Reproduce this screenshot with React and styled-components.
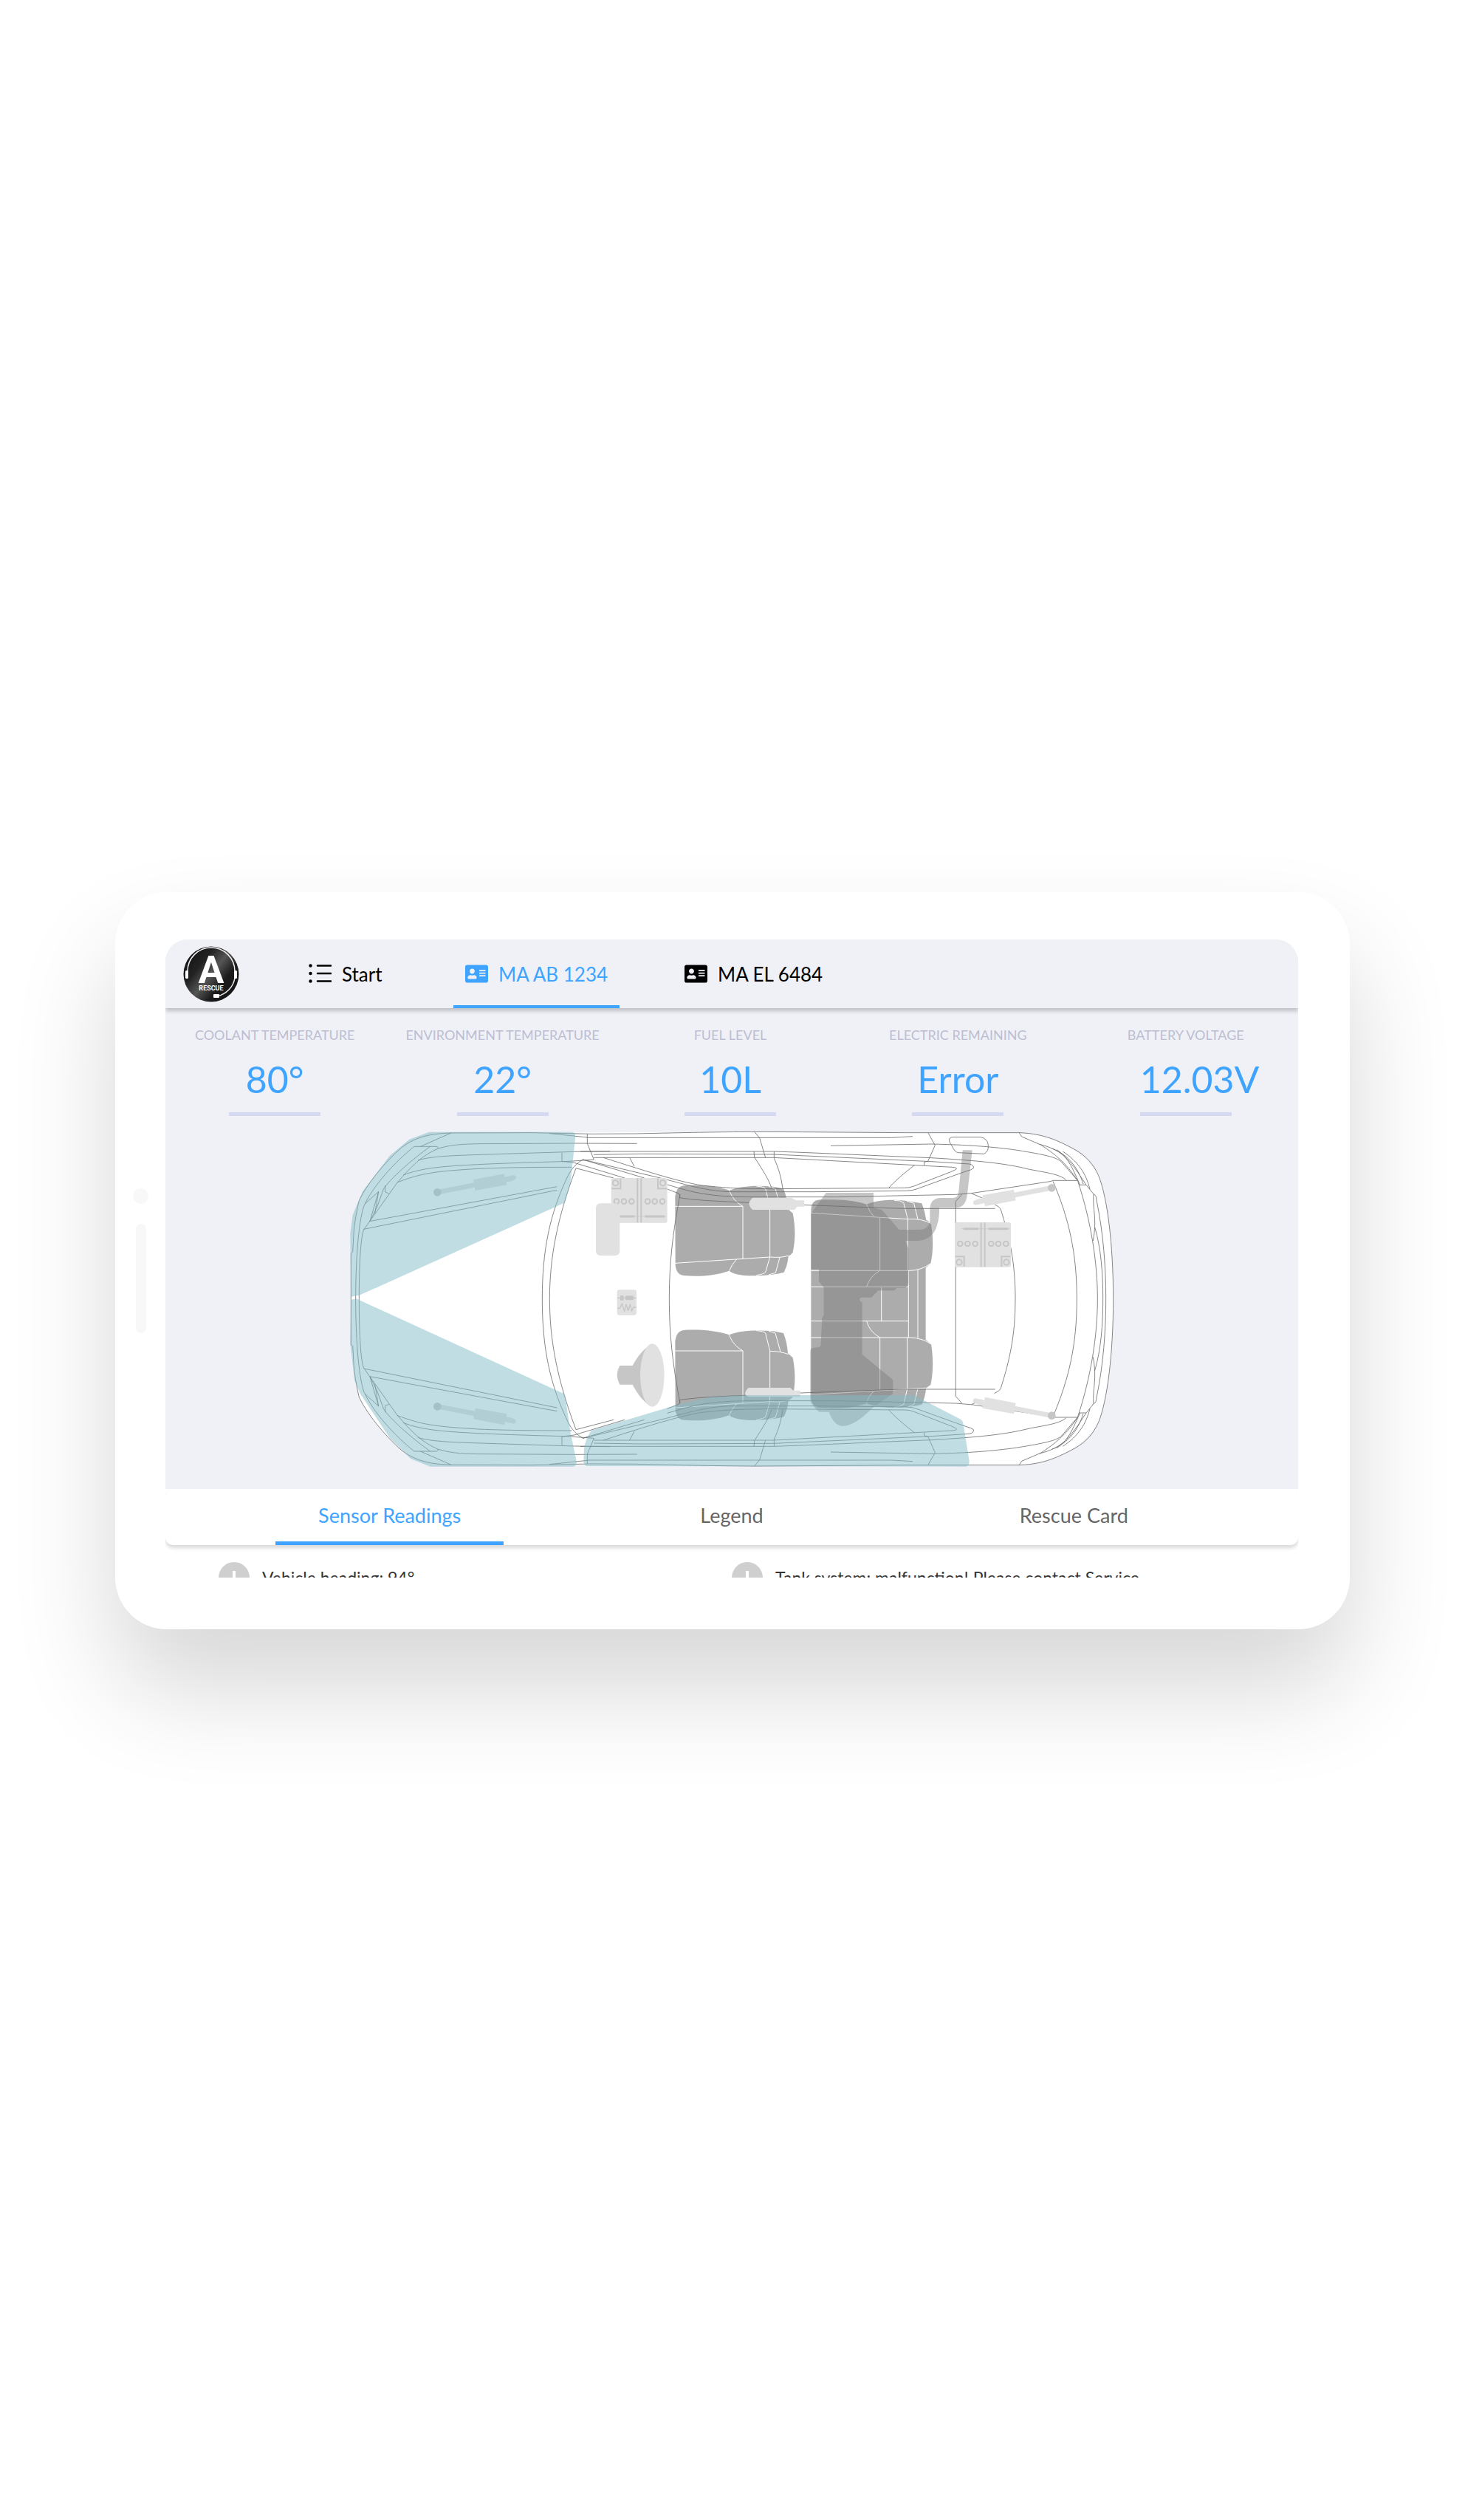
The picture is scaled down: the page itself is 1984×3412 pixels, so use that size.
import React, { useState } from 'react'
import styled, { createGlobalStyle } from 'styled-components'
import { FaAddressCard } from 'react-icons/fa'

const GlobalStyle = createGlobalStyle`
  * {
    box-sizing: border-box;
  }
  body {
    margin: 0;
    background: #fff;
    font-family: 'Lato', sans-serif;
  }
  button {
    border: 0;
    padding: 0;
    background: none;
    font: inherit;
    cursor: pointer;
  }
`

const Page = styled.main`
  min-height: 100vh;
  padding: 2px 156px 0;
  display: grid;
  align-items: center;
  overflow: hidden;
`

const Device = styled.div`
  position: relative;
  padding: 64px 70px 70px 68px;
  border-radius: 70px;
  background: #fff;
  box-shadow: 0 80px 140px rgba(0, 0, 0, 0.16);
`

const SideButtons = styled.div`
  position: absolute;
  left: 24px;
  top: 401px;
  display: grid;
  justify-items: center;
  gap: 27px;
`

const HomeButton = styled.div`
  width: 21px;
  height: 21px;
  border-radius: 50%;
  background: #f8f8f8;
`

const Speaker = styled.div`
  width: 14px;
  height: 148px;
  border-radius: 7px;
  background: #f8f8f8;
`

const Screen = styled.div`
  height: 864px;
  overflow: hidden;
  border-radius: 30px 30px 0 0;
  background: #fff;
`

const Header = styled.header`
  position: relative;
  height: 93px;
  padding-left: 24px;
  display: flex;
  align-items: center;
  background: #f0f1f7;
  box-shadow: 0 4px 5px rgba(0, 0, 0, 0.2);
`

const Nav = styled.nav`
  height: 100%;
  margin-left: 78px;
  display: flex;
  gap: 72px;
`

const NavTab = styled.button`
  height: 100%;
  min-width: 140px;
  padding: 0 16px;
  display: flex;
  align-items: center;
  gap: 14px;
  color: ${props => props.$active ? '#3ea4ff' : '#000'};
  box-shadow: ${props => props.$active ? 'inset 0 -4px #3ea4ff' : 'none'};
  font-size: 26px;
  line-height: 32px;
  white-space: nowrap;

  svg {
    width: 31px;
    height: 31px;
  }
`

const Vehicle = styled.section`
  padding: 26px 0;
  background: #f0f1f7;
`

const Metrics = styled.div`
  margin: 0 -2px 19px -6px;
  display: grid;
  grid-template-columns: repeat(5, 1fr);
`

const Metric = styled.div`
  display: flex;
  flex-direction: column;
  align-items: center;
`

const MetricLabel = styled.div`
  color: #bcbed2;
  font-size: 18px;
  line-height: 20px;
  white-space: nowrap;
`

const MetricValue = styled.div`
  width: 124px;
  height: 100px;
  padding-top: 18px;
  border-bottom: 5px solid #d5d9f1;
  color: #3ea4ff;
  font-size: 50px;
  line-height: 64px;
  display: flex;
  justify-content: ${props => props.$wide ? 'flex-start' : 'center'};
`

const CarDrawing = styled.svg`
  display: block;
  width: 100%;
  max-width: 1040px;
  margin: 0 auto;
`

const Tabs = styled.div`
  position: relative;
  height: 76px;
  padding: 0 72px;
  display: grid;
  grid-template-columns: repeat(3, 1fr);
  border-radius: 10px;
  background: #fff;
  box-shadow: 0 4px 5px rgba(0, 0, 0, 0.15);
`

const Tab = styled.button`
  position: relative;
  padding-bottom: 4px;
  color: ${props => props.$active ? '#3ea4ff' : '#666'};
  font-size: 27px;
  line-height: 32px;

  &::after {
    content: '';
    position: absolute;
    left: calc(100% / 6);
    right: calc(100% / 6);
    bottom: 0;
    height: 5px;
    background: ${props => props.$active ? '#3ea4ff' : 'transparent'};
  }
`

const Readings = styled.ul`
  list-style: none;
  margin: 0;
  padding: 23px 0 0 72px;
  display: grid;
  grid-template-columns: 695px 1fr;
`

const Reading = styled.li`
  display: flex;
  align-items: center;
  gap: 17px;
  color: #333;
  font-size: 23px;
  line-height: 42px;
  white-space: nowrap;

  svg {
    width: 42px;
    height: 42px;
  }
`

const Logo = () => (
  <svg width="76" height="76" viewBox="0 0 76 76" role="img" aria-label="A Rescue">
    <defs>
      <linearGradient id="metal" x1="0" y1="0.1" x2="1" y2="0.9">
        <stop offset="0" stopColor="#111" />
        <stop offset="0.3" stopColor="#222" />
        <stop offset="0.5" stopColor="#555" />
        <stop offset="0.7" stopColor="#1c1c1c" />
        <stop offset="1" stopColor="#111" />
      </linearGradient>
    </defs>
    <circle cx="38" cy="38" r="37.5" fill="url(#metal)" />
    <path d="M6 34A32 32 0 0 1 70 34M70 43C68 56 58 65 46 68" fill="none" stroke="#eee" strokeWidth="1.5" />
    <rect x="3" y="33" width="4" height="11" rx="1.5" fill="#fff" />
    <rect x="69" y="33" width="4" height="11" rx="1.5" fill="#fff" />
    <rect x="41" y="65" width="8" height="5" rx="1" fill="#fff" />
    <text x="38" y="50" textAnchor="middle" fill="#fff" fontFamily="Roboto" fontWeight="700" fontSize="52">A</text>
    <text x="38" y="60" textAnchor="middle" fill="#fff" fontFamily="Roboto" fontWeight="700" fontSize="9">RESCUE</text>
  </svg>
)

const ListIcon = () => (
  <svg viewBox="0 0 31 31" fill="currentColor" aria-hidden="true">
    <circle cx="2.5" cy="4.5" r="2.2" />
    <circle cx="2.5" cy="15" r="2.2" />
    <circle cx="2.5" cy="25.5" r="2.2" />
    <path d="M12 4.5H30M12 15H30M12 25.5H30" stroke="currentColor" strokeWidth="2.6" strokeLinecap="round" />
  </svg>
)

const WarningIcon = () => (
  <svg viewBox="0 0 42 42" aria-hidden="true">
    <circle cx="21" cy="21" r="21" fill="#cfcfcf" />
    <path d="M21 12V24M21 28V32" stroke="#fff" strokeWidth="4" />
  </svg>
)

// upper half of the body lines, the lower half is the same thing flipped
const BodyHalf = () => (
  <>
    <path d="M43 746V560L50 555L52 520C55 450 60 420 75 350C100 290 180 190 250 130C310 85 370 75 450 72L780 71L1020 76L1200 75C1420 70 1520 68 1680 67L1880 68L2300 71H2760C2860 75 2920 105 2985 140C3030 165 3060 200 3080 245C3115 330 3140 520 3140 746" />
    <path d="M325 127L450 72M390 127H300C220 190 130 290 95 370C72 440 62 600 62 746M390 127Q402 130 395 136C330 165 290 205 230 275L95 465C80 500 76 640 76 746" />
    <path d="M100 360L155 310L120 430M182 285V312L197 318M365 127C290 180 200 260 175 300L150 370L120 430M155 310L140 400" />
    <path d="M395 136C450 120 480 118 560 116L950 114L1205 115M315 183C370 165 480 163 600 159L950 148L1095 146" />
    <path d="M255 243C330 215 400 208 560 200C700 193 850 190 930 187L1030 180M230 273C330 235 380 228 560 217C700 211 850 211 940 211" />
    <path d="M118 431L880 290M95 463L880 304M900 152V187L950 193M850 74L1003 90M1003 76V115L1030 180" />
    <path d="M985 180C960 195 940 215 925 245C850 400 820 550 820 746M957 215C880 420 850 580 850 746M957 215L1110 255M985 180L1235 255M950 193L1155 255" />
    <g transform="translate(1020 0)">
      <path d="M-17 91H1220L1305 86M-45 147H740C900 152 1100 162 1380 173C1580 185 1680 195 1780 220C1860 235 1900 240 1928 262" />
      <path d="M10 160L200 157L740 159L1380 188L1535 198Q1555 202 1552 215Q1545 222 1520 228L1320 300Q1305 306 1280 307L900 311H560C450 305 400 285 280 255L-35 180" />
      <path d="M10 172H740L1465 211Q1485 212 1483 218Q1480 222 1460 230L1310 288Q1290 296 1270 295L730 299C600 298 550 296 450 285C350 270 200 220 48 172" />
      <path d="M662 67L683 92L707 172M660 147L662 170C700 230 720 260 732 297M742 147V175C762 220 770 250 777 297M155 172L174 208" />
      <path d="M308 282L370 300C450 322 520 331 640 332H1000L1480 322L1550 316L1870 268M308 300L355 318Q362 325 358 335C450 350 600 352 800 362L1200 377L1280 379H1640M360 322C330 480 316 600 316 746" />
      <path d="M972 124L1380 117C1530 120 1630 128 1730 142C1840 160 1890 170 1910 190L1975 265" />
    </g>
    <g transform="translate(2100 0)">
      <path d="M288 72L316 122L287 187L272 190V203M232 203C190 235 150 270 127 296" />
      <path d="M465 318L507 336M400 746V350L425 322M557 362Q575 370 582 380C620 500 642 600 642 746" />
      <path d="M790 265H895M795 268C860 420 892 560 892 746M900 283H930M895 265C950 430 976 600 976 746" />
      <path d="M930 283L960 320Q972 325 972 345C1000 480 1010 620 1010 746M960 320C955 380 975 420 958 510M965 455C990 540 998 640 998 746" />
      <path d="M658 72L668 87L745 120C800 155 850 195 895 265M740 118C830 140 860 175 930 283M790 135C860 160 900 220 918 280M835 147C900 190 930 240 945 300M810 140C860 170 880 230 905 283" />
    </g>
  </>
)

const FrontSeat = ({ y }) => (
  <g transform={`translate(1020 ${y})`}>
    <path fill="#acacac" d="M340 330C345 300 355 287 380 285C450 283 500 287 560 305C610 285 680 285 740 290L780 298Q795 335 798 380L818 398C830 460 828 510 818 557Q810 568 800 572Q798 605 782 638C740 650 600 665 560 632C490 655 430 655 375 651Q345 648 341 610Z" />
    <path fill="none" stroke="#fff" strokeWidth="3" d="M340 370H615V582M560 305C570 335 590 355 615 370M340 601L725 576Q775 580 800 570M560 632Q570 605 590 585M725 370V576M725 371Q770 372 800 384M670 288Q700 290 707 298L725 370M720 289L747 298L768 374M725 576L707 638Q700 645 670 650M765 578L748 640L720 648" />
  </g>
)

const RearBench = () => (
  <g transform="translate(2100 0)">
    <path fill="#acacac" d="M-188 395C-188 360 -180 345 -150 343C-90 342 -20 342 38 362C90 342 150 342 200 348L262 358Q275 390 280 425Q295 432 300 445C310 500 308 560 298 602L278 620V912L300 930C310 990 308 1050 298 1095L280 1108Q275 1150 262 1175C200 1190 100 1195 38 1170C-30 1195 -100 1190 -160 1187Q-185 1180 -188 1150Z" />
    <path fill="none" stroke="#fff" strokeWidth="3" d="M-188 397L95 415L205 422V631M92 415V631M38 362Q50 395 68 412M-188 631H215Q260 630 298 602M92 631Q50 655 38 697M-188 697H208M98 697V838M-188 836H208M208 631V903M246 628V905M38 836Q50 880 92 903M-188 903H215Q265 905 300 930M92 903V1115M203 903V1112M-188 1135L68 1120L205 1112L280 1108M68 1120Q45 1140 38 1170M203 1112L188 1175Q170 1185 150 1187M246 1110L230 1175L205 1185M205 422L188 355Q175 345 150 346M246 422L230 358L200 348M205 422Q260 418 300 440" />
  </g>
)

const Battery = ({ place }) => (
  <g transform={place} fill="none" stroke="#c6c6c6" strokeWidth="6">
    <rect width="228" height="182" rx="9" fill="#e1e1e1" stroke="none" />
    <path d="M2 43H38V2M190 2V43H226M107 1V181M122 1V181" />
    <path strokeWidth="9" d="M35 156H96M137 156H217" />
    <path strokeWidth="2" d="M25 156H224" />
    <circle cx="18" cy="20" r="11" />
    <circle cx="210" cy="20" r="11" />
    {[22, 52, 83, 148, 177, 208].map(x => <circle key={x} cx={x} cy="95" r="10" />)}
  </g>
)

const Strut = ({ place }) => (
  <g transform={place}>
    <path d="M0 0L155 -30" stroke="#e1e1e1" strokeWidth="20" />
    <path d="M146 -51L271 -75L274 -62L310 -70Q322 -68 319 -56Q316 -48 281 -42L281 -30L154 -7Z" fill="#e1e1e1" />
    <circle r="16" fill="#c6c6c6" />
  </g>
)

const Car = () => (
  <CarDrawing viewBox="30 60 3120 1380" role="img" aria-label="Vehicle seen from above">
    <path fill="#fff" d="M43 746C40 520 55 420 75 350C100 290 180 190 250 130C310 85 370 75 450 72L1680 67L2760 72C2900 75 3040 160 3080 245C3115 330 3140 520 3140 746C3140 970 3115 1162 3080 1247C3040 1332 2900 1417 2760 1420L1680 1425L450 1420C370 1417 310 1407 250 1362C180 1302 100 1202 75 1142C55 1072 40 972 43 746Z" />
    <FrontSeat y={0} />
    <FrontSeat y={587} />
    <RearBench />
    <g transform="translate(2100 0)">
      <path fill="#777" fillOpacity="0.42" d="M-188 400L-127 315H66V375L100 385L170 465H250Q290 465 295 430V375Q300 338 335 336H390Q410 335 412 310L428 142H467L447 320Q442 375 400 376H333Q335 420 320 460Q300 505 250 510H195L208 540V680Q205 700 190 702H160L150 712H85L58 740H15Q3 749 15 758H20V972L145 1075V1130L60 1190Q-10 1262 -60 1262Q-95 1262 -115 1205H-155Q-190 1175 -191 1155V960Q-190 945 -180 945L-160 943Q-148 943 -148 930L-143 825L-136 810V700L-156 675V625H-188Z" />
    </g>
    <g fill="none" stroke="#6d6d6d" strokeWidth="2.5">
      <BodyHalf />
      <g transform="matrix(1 0 0 -1 0 1492)">
        <BodyHalf />
      </g>
      <path d="M2488 89H2602Q2630 95 2632 122Q2635 145 2615 157L2510 152Q2495 150 2485 125C2470 105 2468 90 2488 89Z" />
    </g>
    <Strut place="translate(394 313)" />
    <Strut place="matrix(1 0 0 -1 394 1183)" />
    <Strut place="matrix(-1 0 0 -1 2890 295)" />
    <Strut place="matrix(-1 0 0 1 2890 1220)" />
    <Battery place="translate(1100 255)" />
    <Battery place="matrix(1 0 0 -1 2496 617)" />
    <g transform="translate(1020 0)">
      <rect x="18" y="358" width="97" height="212" rx="18" fill="#e1e1e1" />
      <rect x="104" y="709" width="79" height="103" rx="10" fill="#e1e1e1" />
      <path fill="none" stroke="#c6c6c6" strokeWidth="4" strokeLinejoin="round" d="M105 742H183M105 784H116L124 765L134 796L141 768L149 794L157 768L164 795L170 780H182" />
      <rect x="117" y="732" width="14" height="20" rx="3" fill="#c6c6c6" />
      <rect x="137" y="733" width="35" height="18" rx="8" fill="#c6c6c6" />
      <path fill="#c6c6c6" d="M115 1017H167C190 975 215 945 245 930V1182C215 1170 185 1130 167 1094H115Q93 1055 115 1017Z" />
      <ellipse cx="247" cy="1056" rx="49" ry="128" fill="#e1e1e1" />
      <path fill="#e1e1e1" d="M655 335H812L832 346H864V371H836L825 384H655Q640 370 640 358Q643 345 655 335ZM639 1107H808L820 1118H848V1144H640Q624 1138 624 1130Q627 1115 639 1107Z" />
    </g>
    <g fill="#80bcc6" fillOpacity="0.5">
      <path d="M43 738L40 480L50 405L90 310L200 165L280 98L360 68H940Q955 70 955 85L935 270L912 355L80 730Z" />
      <path d="M43 750L65 745L80 752L912 1133L935 1290L960 1410Q958 1427 945 1427H365L285 1395L200 1310L80 1130L58 1080L40 930Z" />
      <path d="M1000 1425Q988 1420 988 1405L990 1350Q1000 1305 1020 1280L1382 1172L1500 1145L1640 1137H2330L2520 1235Q2528 1240 2530 1250L2555 1405Q2555 1427 2540 1427Z" />
    </g>
  </CarDrawing>
)

const metrics = [
  { label: 'COOLANT TEMPERATURE', value: '80°' },
  { label: 'ENVIRONMENT TEMPERATURE', value: '22°' },
  { label: 'FUEL LEVEL', value: '10L' },
  { label: 'ELECTRIC REMAINING', value: 'Error' },
  { label: 'BATTERY VOLTAGE', value: '12.03V', wide: true },
]

const App = () => {
  const [page, setPage] = useState('MA AB 1234')
  const [tab, setTab] = useState('Sensor Readings')

  return (
    <>
      <GlobalStyle />
      <Page>
        <Device>
          <SideButtons>
            <HomeButton />
            <Speaker />
          </SideButtons>
          <Screen>
            <Header>
              <Logo />
              <Nav>
                {['Start', 'MA AB 1234', 'MA EL 6484'].map(name => (
                  <NavTab key={name} $active={page === name} onClick={() => setPage(name)}>
                    {name === 'Start' ? <ListIcon /> : <FaAddressCard />}
                    {name}
                  </NavTab>
                ))}
              </Nav>
            </Header>
            <Vehicle>
              <Metrics>
                {metrics.map(m => (
                  <Metric key={m.label}>
                    <MetricLabel>{m.label}</MetricLabel>
                    <MetricValue $wide={m.wide}>{m.value}</MetricValue>
                  </Metric>
                ))}
              </Metrics>
              <Car />
            </Vehicle>
            <Tabs>
              {['Sensor Readings', 'Legend', 'Rescue Card'].map(name => (
                <Tab key={name} $active={tab === name} onClick={() => setTab(name)}>{name}</Tab>
              ))}
            </Tabs>
            <Readings>
              <Reading><WarningIcon />Vehicle heading: 94°</Reading>
              <Reading><WarningIcon />Tank system: malfunction! Please contact Service.</Reading>
            </Readings>
          </Screen>
        </Device>
      </Page>
    </>
  )
}

export default App
